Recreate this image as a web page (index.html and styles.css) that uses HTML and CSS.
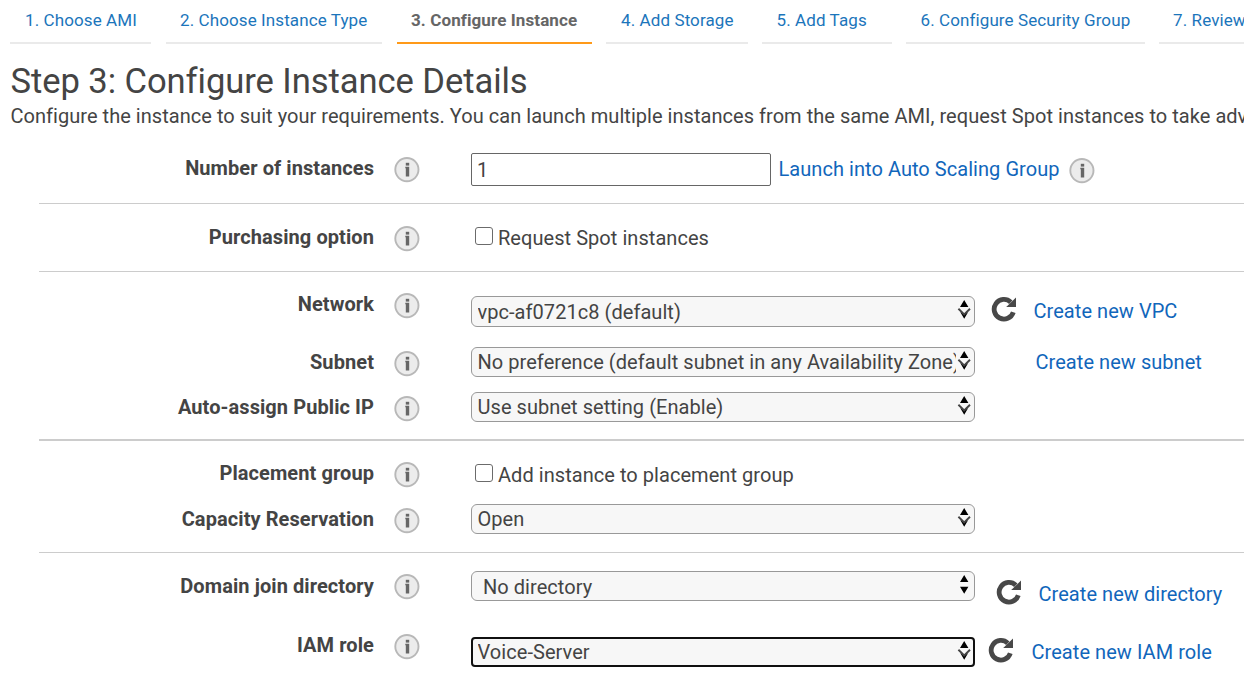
FILE: index.html
```html
<!DOCTYPE html>
<html lang="en">
<head>
<meta charset="utf-8">
<title>Configure Instance Details</title>
<link rel="stylesheet" href="styles.css">
</head>
<body>
<svg class="sprite" aria-hidden="true">
  <symbol id="info" viewBox="0 0 26 26">
    <circle cx="12.9" cy="12.6" r="11.6" fill="#ececec" stroke="#b8b8b8" stroke-width="1.9"/>
    <rect x="11.8" y="5.8" width="3.4" height="2.8" fill="#666"/>
    <path d="M11.3 9.8h3.9v9.6h-3.4v-8.2h-.5z" fill="#666"/>
  </symbol>
  <symbol id="refresh" viewBox="0 0 26 26">
    <path d="M19.8 6.2A9.8 9.8 0 1 0 22.3 16.2" fill="none" stroke="#484848" stroke-width="4.8"/>
    <path d="M25 1.6V11H15.2z" fill="#484848"/>
  </symbol>
  <symbol id="arrows" viewBox="0 0 14 20">
    <path d="M7.2 0l4.2 7H3zM3 11.7h8.4l-4.2 7z" fill="#000"/>
  </symbol>
  <symbol id="arrows-chevron" viewBox="0 0 14 20">
    <path d="M7.2 0l4.2 7H3zM3.2 12l4 2.4l4-2.4l-4 6.7z" fill="#000"/>
    <path d="M1.4 8.8L7.2 14.4L13 8.8" fill="none" stroke="#444" stroke-width="1.9"/>
  </symbol>
</svg>
<nav class="tabs">
  <a class="tab tab--ami">1. Choose AMI</a>
  <a class="tab tab--type">2. Choose Instance Type</a>
  <a class="tab tab--configure tab--active">3. Configure Instance</a>
  <a class="tab tab--storage">4. Add Storage</a>
  <a class="tab tab--tags">5. Add Tags</a>
  <a class="tab tab--security">6. Configure Security Group</a>
  <a class="tab tab--review">7. Review</a>
</nav>
<header class="intro">
  <h1>Step 3: Configure Instance Details</h1>
  <p>Configure the instance to suit your requirements. You can launch multiple instances from the same AMI, request Spot instances to take advantage</p>
</header>
<main class="form">
  <section>
    <div class="row row--count">
      <label>Number of instances</label>
      <svg class="info"><use href="#info"/></svg>
      <div class="field"><div class="input">1</div><a class="link">Launch into Auto Scaling Group</a><svg class="info info--inline"><use href="#info"/></svg></div>
    </div>
  </section>
  <section>
    <div class="row row--purchase">
      <label>Purchasing option</label>
      <svg class="info"><use href="#info"/></svg>
      <div class="field"><span class="checkbox"></span><span class="check-text">Request Spot instances</span></div>
    </div>
  </section>
  <section class="section--heavy">
    <div class="row row--network">
      <label>Network</label>
      <svg class="info"><use href="#info"/></svg>
      <div class="field"><div class="select"><span>vpc-af0721c8 (default)</span><svg><use href="#arrows-chevron"/></svg></div><svg class="refresh"><use href="#refresh"/></svg><a class="link">Create new VPC</a></div>
    </div>
    <div class="row row--subnet">
      <label>Subnet</label>
      <svg class="info"><use href="#info"/></svg>
      <div class="field"><div class="select"><span>No preference (default subnet in any Availability Zone)</span><svg><use href="#arrows-chevron"/></svg></div><a class="link">Create new subnet</a></div>
    </div>
    <div class="row row--ip">
      <label>Auto-assign Public IP</label>
      <svg class="info"><use href="#info"/></svg>
      <div class="field"><div class="select"><span>Use subnet setting (Enable)</span><svg><use href="#arrows-chevron"/></svg></div></div>
    </div>
  </section>
  <section>
    <div class="row row--placement">
      <label>Placement group</label>
      <svg class="info"><use href="#info"/></svg>
      <div class="field"><span class="checkbox"></span><span class="check-text">Add instance to placement group</span></div>
    </div>
    <div class="row row--capacity">
      <label>Capacity Reservation</label>
      <svg class="info"><use href="#info"/></svg>
      <div class="field"><div class="select"><span>Open</span><svg><use href="#arrows-chevron"/></svg></div></div>
    </div>
  </section>
  <section class="section--last">
    <div class="row row--domain">
      <label>Domain join directory</label>
      <svg class="info"><use href="#info"/></svg>
      <div class="field"><div class="select"><span>No directory</span><svg><use href="#arrows"/></svg></div><svg class="refresh"><use href="#refresh"/></svg><a class="link">Create new directory</a></div>
    </div>
    <div class="row row--iam">
      <label>IAM role</label>
      <svg class="info"><use href="#info"/></svg>
      <div class="field"><div class="select select--focus"><span>Voice-Server</span><svg><use href="#arrows-chevron"/></svg></div><svg class="refresh"><use href="#refresh"/></svg><a class="link">Create new IAM role</a></div>
    </div>
  </section>
</main>
</body>
</html>
```
FILE: styles.css
```css
* { box-sizing: border-box; }
html, body { height: 682px; overflow: hidden; }
body {
  margin: 0;
  background: #fff;
  color: #444;
  font: 20px/24px Roboto, "Liberation Sans", sans-serif;
  letter-spacing: 0.05px;
  white-space: nowrap;
}
svg { display: block; flex: none; }
.sprite { display: none; }

/* Wizard steps */
.tabs { display: flex; height: 44px; padding-left: 10px; }
.tab {
  flex: none;
  padding: 10px 0 0 15px;
  border-bottom: 2px solid #eaeaea;
  color: #1b75bb;
  font-size: 17px;
  line-height: 20px;
  letter-spacing: 0.1px;
}
.tab--ami { width: 141px; margin-right: 15px; }
.tab--type { width: 216px; margin-right: 15px; padding-left: 14px; }
.tab--configure { width: 195px; margin-right: 14px; padding-left: 14px; }
.tab--storage { width: 142px; margin-right: 14px; }
.tab--tags { width: 130px; margin-right: 14px; padding-left: 14.5px; }
.tab--security { width: 239px; margin-right: 14px; padding-left: 14.5px; }
.tab--review { width: 130px; padding-left: 14px; }
.tab--active { border-color: #ff9a19; color: #666; font-weight: 700; }

.intro { height: 101px; padding: 17px 0 0 10.5px; overflow: hidden; }
h1 { margin: 0; font-size: 34.6px; line-height: 40px; font-weight: 400; letter-spacing: -0.07px; }
p { margin: 3px 0 0; letter-spacing: 0.038px; }

/* Form rows: label, help icon, field */
.form { padding-left: 39px; }
section { border-bottom: 1px solid #ccc; }
.section--heavy { border-bottom-width: 2px; }
.section--last { border-bottom: 0; }
.row {
  display: grid;
  grid-template-columns: 335px 26px 1fr;
  column-gap: 20px;
  align-items: start;
}
label { text-align: right; font-weight: 700; letter-spacing: 0.08px; }
.info { width: 26px; height: 26px; margin-top: 1px; }
.field { display: flex; align-items: flex-start; padding-left: 31px; }
.link { color: #1166bb; }

.input {
  width: 300px;
  height: 33px;
  padding: 4px 5px;
  border: 1px solid #666;
  border-radius: 2px;
}
.checkbox {
  width: 18px;
  height: 18px;
  margin: 1px 5px 0 4px;
  border: 1px solid #6b6b6b;
  border-radius: 3px;
}
.select {
  display: flex;
  flex: none;
  width: 504px;
  height: 30px;
  padding: 2px 3px 0 5.5px;
  border: 1px solid #999;
  border-radius: 6px;
  background: #f7f7f7;
}
.select span { flex: 1; min-width: 0; overflow: hidden; }
.select svg { width: 14px; height: 20px; margin: 1px 0 0 1px; }
.select--focus { padding: 1px 2px 0 4.5px; border: 2px solid #101010; border-radius: 4px; }
.refresh { width: 26px; height: 26px; }

.row--count { height: 58px; padding-top: 8px; }
.row--count label { margin-top: 3px; }
.row--count .info { margin-top: 4px; }
.row--count .link { margin: 4px 0 0 7.5px; }
.row--count .info--inline { margin: 5px 0 0 9px; }

.row--purchase { height: 67px; padding-top: 21px; }
.row--purchase .checkbox { margin-top: 2px; }
.row--purchase .check-text { margin-top: 1px; }

.row--network { height: 68px; padding-top: 20px; }
.row--network .select { height: 31px; margin-top: 4px; }
.row--network .select span { padding-top: 1px; }
.row--network .refresh { margin: 4px 16.5px 0 16px; }
.row--network .link { margin-top: 7px; }

.row--subnet { height: 47px; padding-top: 7px; }
.row--subnet label { margin-top: 3px; }
.row--subnet .info { margin-top: 4px; }
.row--subnet .link { margin: 3px 0 0 60.5px; }

.row--ip { height: 52px; padding-top: 5px; }
.row--ip label { margin-top: 3px; }
.row--ip .info { margin-top: 4px; }

.row--placement { height: 58px; padding-top: 20px; }
.row--placement .checkbox { margin-top: 3px; }
.row--placement .check-text { margin-top: 2px; }

.row--capacity { height: 53px; padding-top: 5px; }
.row--capacity label { margin-top: 3px; }
.row--capacity .info { margin-top: 4px; }

.row--domain { height: 75px; padding-top: 18px; }
.row--domain label, .row--domain .info { margin-top: 3px; }
.row--domain .select span { padding: 1px 0 0 5.5px; }
.row--domain .refresh { margin: 8px 16.5px 0 21px; }
.row--domain .link { margin-top: 11px; }

.row--iam { height: 54px; padding-top: 5px; }
.row--iam .select { margin-top: 4px; }
.row--iam .refresh { margin: 4px 17.5px 0 13px; }
.row--iam .link { margin-top: 7px; }
```
